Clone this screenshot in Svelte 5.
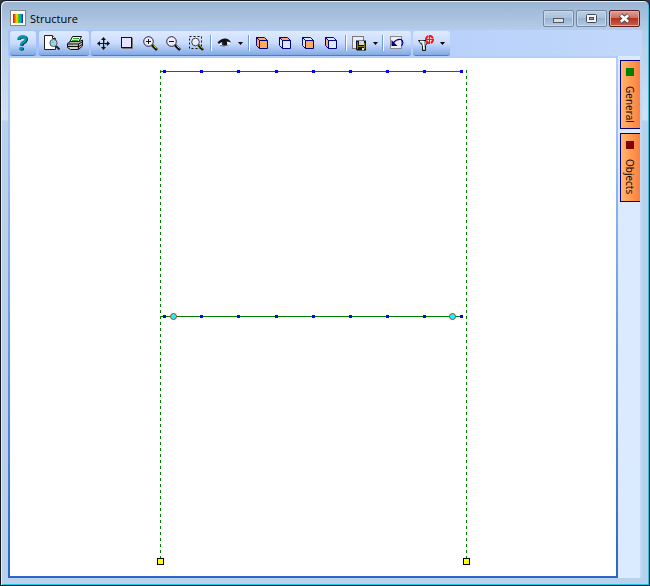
<script lang="ts">
    const nodes = [154, 191, 228, 266, 303, 340, 377, 414, 451];
    const beams = [13, 258];
    const columns = [150, 456];
    const hinges = [163, 442];

    const tabs = [
        { label: 'General', color: 'green' },
        { label: 'Objects', color: 'maroon' },
    ];

    const cubes = [
        { label: 'All faces', front: true, top: true, left: true },
        { label: 'Top face', front: false, top: true, left: false },
        { label: 'Front face', front: true, top: false, left: false },
        { label: 'Left face', front: false, top: false, left: true },
    ];

    let active = $state('General');

    function face(on: boolean) {
        return on ? '#ffa860' : '#dce8ff';
    }
</script>

{#snippet arrow(label: string)}
    <button class="drop" aria-label={label}>
        <svg width="5" height="3" viewBox="0 0 5 3"><path d="M0 0h5L2.5 3z" /></svg>
    </button>
{/snippet}

<div class="window">
    <header class="titlebar">
        <svg class="logo" width="16" height="16" viewBox="0 0 16 16">
            <defs>
                <linearGradient id="spectrum">
                    <stop offset="0" stop-color="#f00020" />
                    <stop offset=".18" stop-color="#ff6000" />
                    <stop offset=".38" stop-color="#ffe800" />
                    <stop offset=".6" stop-color="#20c020" />
                    <stop offset=".78" stop-color="#00b0e0" />
                    <stop offset="1" stop-color="#2010d0" />
                </linearGradient>
            </defs>
            <rect x=".5" y=".5" width="15" height="15" fill="#fff" stroke="#858585" />
            <rect x="3" y="4" width="10" height="9" fill="url(#spectrum)" />
        </svg>
        <h1>Structure</h1>
        <div class="controls">
            <button aria-label="Minimize">
                <svg width="29" height="15" viewBox="0 0 29 15">
                    <rect x="9.5" y="7.5" width="10" height="4" fill="#dedede" stroke="#555a66" />
                </svg>
            </button>
            <button aria-label="Maximize">
                <svg width="29" height="15" viewBox="0 0 29 15">
                    <rect x="9.5" y="3.5" width="10" height="8" rx="1" fill="#f4f4f4" stroke="#474b5c" />
                    <rect x="12.5" y="6.5" width="4" height="2" fill="#8eaace" stroke="#474b5c" />
                </svg>
            </button>
            <button class="close" aria-label="Close">
                <svg width="29" height="15" viewBox="0 0 29 15">
                    <path d="M10.5 4l8 7M18.5 4l-8 7" stroke="#464858" stroke-width="4.5" />
                    <path d="M10.8 4.3l7.4 6.4M18.2 4.3l-7.4 6.4" stroke="#fff" stroke-width="2.6" />
                </svg>
            </button>
        </div>
    </header>

    <div class="client">
        <nav class="toolbar">
            <div class="group help">
                <button class="tool" aria-label="Help">
                    <svg width="17" height="17" viewBox="0 0 17 17" fill="none">
                        <path d="M5 6Q5 3 9 3Q13 3 12.5 6Q12 8 9.5 9Q8 10 8 12" stroke="#003c50" stroke-width="3" />
                        <path d="M4.5 5.5Q5 2.5 8.5 2.5Q12 2.5 11.5 5.5Q11 7.5 8.5 8.5Q7 9.5 7 11.5" stroke="#009ca8" stroke-width="2.6" />
                        <ellipse cx="7.8" cy="15" rx="2.4" ry="1.7" fill="#003c50" />
                        <ellipse cx="7" cy="14.6" rx="2" ry="1.5" fill="#009ca8" />
                    </svg>
                </button>
            </div>

            <div class="group files">
                <button class="tool" aria-label="Preview">
                    <svg width="17" height="17" viewBox="0 0 17 17">
                        <path d="M.5 1.5h8l3 3v11H.5z" fill="#fff" stroke="#222" />
                        <path d="M8.5 1.5v3h3" fill="#fff" stroke="#222" />
                        <path d="M12 12l3.5 3.5" stroke="#222" stroke-width="2" />
                        <circle cx="9.5" cy="9" r="3.6" fill="#a6d8e4" stroke="#555" />
                        <path d="M7.5 8.5l2-1.5v2z" fill="#00d8e8" />
                    </svg>
                </button>
                <button class="tool" aria-label="Print">
                    <svg width="17" height="17" viewBox="0 0 17 17">
                        <path d="M5.5 2.5h9l-3 6h-9z" fill="#fff" stroke="#111" />
                        <path d="M6 4.5h6M5 6.5h6" stroke="#20b020" />
                        <path d="M.5 9.5l3-2h9l3-1.5v6l-4 3.5h-8l-3-2z" fill="#b8b8b0" stroke="#111" />
                        <path d="M1 10h10.5l3.5-2M11.5 10v5M1 12.5h10M12 12.5l3-2" fill="none" stroke="#111" />
                        <path d="M6 11.3h4" stroke="#e8e000" />
                        <path d="M3 14h7" stroke="#eee" />
                    </svg>
                </button>
            </div>

            <div class="group view">
                <button class="tool" aria-label="Move">
                    <svg width="17" height="17" viewBox="0 0 17 17">
                        <path d="M9.5 6v3M10 10.5h3M9.5 11v3" stroke="#8890a0" />
                        <path d="M8.5 4v11M3 9.5h11" stroke="#111" />
                        <path d="M8.5 3l2.5 3H6zM8.5 16L6 13h5zM2 9.5L5 7v5zM15 9.5L12 7v5z" fill="#111" />
                    </svg>
                </button>
                <button class="tool" aria-label="Window">
                    <svg width="17" height="17" viewBox="0 0 17 17">
                        <path d="M4 14.5h10.5V4" fill="none" stroke="#777" />
                        <rect x="3.5" y="3.5" width="10" height="10" fill="#e8e4ff" stroke="#111" />
                    </svg>
                </button>
                {#each ['Zoom in', 'Zoom out'] as label}
                    <button class="tool" aria-label={label}>
                        <svg width="17" height="17" viewBox="0 0 17 17">
                            <path d="M11 11l5 5" stroke="#111" stroke-width="2.6" />
                            <path d="M12.5 11.5l3 3" stroke="#e0d800" />
                            <circle cx="7.5" cy="7.5" r="4.8" fill="#f0ecff" stroke="#222" />
                            <path d="M5 7.5h5" stroke="#111" />
                            {#if label === 'Zoom in'}
                                <path d="M7.5 5v5" stroke="#111" />
                            {/if}
                        </svg>
                    </button>
                {/each}
                <button class="tool" aria-label="Zoom window">
                    <svg width="17" height="17" viewBox="0 0 17 17">
                        <rect x="2.5" y="2.5" width="12" height="12" fill="none" stroke="#111" stroke-dasharray="2 2" />
                        <path d="M11.5 11l4.5 5" stroke="#111" stroke-width="2.6" />
                        <path d="M12.5 11l3 3.5" stroke="#e0d800" />
                        <circle cx="8.5" cy="8" r="3.8" fill="#f0ecff" stroke="#444" />
                    </svg>
                </button>
                <span class="sep"></span>
                <button class="tool" aria-label="Display">
                    <svg width="17" height="17" viewBox="0 0 17 17">
                        <path d="M2 9Q5 5.5 9 6Q13 6 14.5 9Q12 12 8 12Q4 12 2 9z" fill="#fff" />
                        <path d="M1.5 8.5Q5 4.5 9 4.5Q13 4.5 15 8.5Q11 7 8 7.5Q5 7.5 3 10z" fill="#111" />
                        <circle cx="8.5" cy="9.3" r="2.7" fill="#111" />
                        <path d="M7 8.5v3h2" fill="none" stroke="#3030c0" />
                        <path d="M4 11.5Q8 13 12.5 11" fill="none" stroke="#777" />
                    </svg>
                </button>
                {@render arrow('Display options')}
                <span class="sep wide"></span>
                {#each cubes as cube}
                    <button class="tool" aria-label={cube.label}>
                        <svg width="17" height="17" viewBox="0 0 17 17" stroke="#000080" stroke-linejoin="round">
                            <path d="M2.5 3.5h8l3 3h-8z" fill={face(cube.top)} />
                            <path d="M2.5 3.5l3 3v8l-3-3z" fill={face(cube.left)} />
                            <rect x="5.5" y="6.5" width="8" height="8" fill={face(cube.front)} />
                        </svg>
                    </button>
                {/each}
                <span class="sep late"></span>
                <button class="tool save" aria-label="Save">
                    <svg width="17" height="17" viewBox="0 0 17 17">
                        <rect x=".5" y="2.5" width="11" height="12" fill="#e4ecff" stroke="#777" />
                        <path d="M4 6.5h10v10H5l-1-1z" fill="#111" />
                        <path d="M5.5 8v7M12.5 9v6" stroke="#8c8000" />
                        <rect x="7" y="7" width="5" height="4" fill="#d8d8d8" />
                        <path d="M6 12.5h7" stroke="#8c8000" />
                        <rect x="10" y="14" width="2" height="2" fill="#e0e0e0" />
                    </svg>
                </button>
                {@render arrow('Save options')}
                <span class="sep late"></span>
                <button class="tool" aria-label="Undo">
                    <svg width="17" height="17" viewBox="0 0 17 17">
                        <rect x="1.5" y="2.5" width="11" height="12" fill="#f0ecff" stroke="#888" />
                        <path d="M4 9Q8 4.5 12 5.5Q15.5 8 12.5 12" fill="none" stroke="#000080" stroke-width="1.2" />
                        <path d="M2.5 6v6h6z" fill="#000080" />
                    </svg>
                </button>
            </div>

            <div class="group filter">
                <button class="tool" aria-label="Filter">
                    <svg width="17" height="17" viewBox="0 0 17 17">
                        <path d="M.5 6.5h11l-4 5v5h-3v-5z" fill="#8fb0b2" stroke="#111" />
                        <path d="M2 7.5h3l1 8" fill="none" stroke="#fff" stroke-width="1.4" />
                        <circle cx="11.5" cy="5.5" r="3.5" fill="#ffd8d8" stroke="#f01820" stroke-width="2" stroke-dasharray="4 1.5" />
                        <path d="M11.5 1v9M7 5.5h9" stroke="#f01820" />
                    </svg>
                </button>
                {@render arrow('Filter options')}
            </div>
        </nav>

        <div class="workspace">
            <main class="canvas">
                <svg class="drawing" viewBox="0 0 606 518" shape-rendering="crispEdges">
                    {#each columns as x}
                        <path d="M{x + 0.5} 12V500" stroke="green" stroke-dasharray="3 3" />
                        <rect x={x - 2.5} y="500.5" width="6" height="6" fill="#ff0" stroke="#000" />
                    {/each}
                    {#each beams as y}
                        <path d="M150 {y + 0.5}H453" stroke="green" />
                        {#each nodes as x}
                            <rect x={x - 1} y={y - 1} width="3" height="3" fill="#00f" />
                        {/each}
                    {/each}
                    {#each hinges as x}
                        <circle
                            cx={x + 0.5}
                            cy="258.5"
                            r="3"
                            fill="#0ff"
                            stroke="#e02020"
                            shape-rendering="auto"
                        />
                    {/each}
                </svg>
            </main>
        </div>

        <aside class="side">
            {#each tabs as tab}
                <button class="tab" aria-pressed={active === tab.label} onclick={() => (active = tab.label)}>
                    <svg width="8" height="8" viewBox="0 0 8 8"><rect width="8" height="8" fill={tab.color} /></svg>
                    <span>{tab.label}</span>
                </button>
            {/each}
        </aside>
    </div>
</div>

<style>
    :global(body) {
        background: #303840;
    }

    .window {
        box-sizing: border-box;
        min-height: 100vh;
        display: flex;
        flex-direction: column;
        padding: 0 7px 7px;
        border: 1px solid #14181c;
        border-radius: 6px 6px 0 0;
        background: linear-gradient(#9ab4d3, #b6cde8 30px, #d3e2f3 119px, #b9d1ea 120px);
        box-shadow: inset 1px 1px #e4eefa, inset -1px -1px #1cc8ec;
        font-family: 'Open Sans', 'Noto Sans', sans-serif;
        font-size: 12px;
    }

    button {
        margin: 0;
        padding: 0;
        border: 0;
        background: none;
        font: inherit;
    }

    svg {
        display: block;
    }

    .titlebar {
        display: flex;
        height: 29px;
        padding: 0 2px;
    }

    .logo {
        margin-top: 9px;
    }

    h1 {
        flex: 1;
        margin: 9px 0 0 4px;
        font-size: 11px;
        line-height: 17px;
        font-weight: normal;
        color: #000;
    }

    .controls {
        display: flex;
        align-items: flex-start;
        gap: 2px;
        margin-top: 9px;
    }

    .controls button {
        border: 1px solid #7187a3;
        border-radius: 2px;
        background: linear-gradient(#bccfe4, #a9c1dc 50%, #98b3d0 50%, #b3cbe4);
        box-shadow: inset 0 0 0 1px #c8d9ec;
    }

    .controls .close {
        border-color: #57202a;
        background: linear-gradient(#dda398, #cc6a58 50%, #b8321c 50%, #c8614b);
        box-shadow: inset 0 0 0 1px #e2aaa0;
    }

    .client {
        flex: 1;
        display: grid;
        grid-template: 26px 1fr / 1fr 24px;
        background: #bed6f8;
    }

    .toolbar {
        grid-column: 1 / 3;
        display: flex;
        align-items: flex-start;
        gap: 2px;
        padding: 1px 2px 0;
        background: linear-gradient(90deg, #a4c2f8, #c2d8fb);
    }

    .group {
        display: flex;
        height: 24px;
        border-bottom: 1px solid #4e7dc4;
        border-radius: 3px;
        background: linear-gradient(#dfeaff, #c9dcfc 50%, #82a9e4);
    }

    .help {
        padding: 0 2px 0 1px;
        margin-right: 1px;
    }

    .files {
        padding: 0 2px;
    }

    .view {
        padding: 0 2px 0 1px;
    }

    .filter {
        padding: 0 3px 0 2px;
    }

    .tool {
        height: 23px;
        padding: 3px;
    }

    .save {
        padding-right: 2px;
    }

    .drop {
        width: 9px;
        height: 23px;
        padding: 2px 2px 0;
    }

    .sep {
        width: 1px;
        height: 16px;
        margin: 4px 1px 0 3px;
        border-right: 1px solid #fff;
        background: #6f9bda;
    }

    .wide {
        margin-right: 1px;
    }

    .late {
        margin-left: 2px;
        margin-right: 2px;
    }

    .workspace {
        display: flex;
        padding: 2px;
        background: linear-gradient(#b4cefb, #2c65c8);
    }

    .canvas {
        flex: 1;
        background: #fff;
    }

    .drawing {
        width: 100%;
        height: auto;
    }

    .side {
        display: flex;
        flex-direction: column;
        gap: 4px;
        padding: 4px 0 0 2px;
        border-right: 2px solid #bed8f8;
        background: #dceaff;
    }

    .tab {
        display: flex;
        flex-direction: column;
        align-items: center;
        gap: 10px;
        box-sizing: border-box;
        height: 69px;
        padding: 7px 1px 0 0;
        border: 1px solid #000080;
        border-right: 0;
        background: linear-gradient(90deg, #ffb86c, #ff7f3c);
        color: #000;
    }

    .tab span {
        writing-mode: vertical-rl;
        font-size: 10px;
        line-height: 14px;
    }
</style>
